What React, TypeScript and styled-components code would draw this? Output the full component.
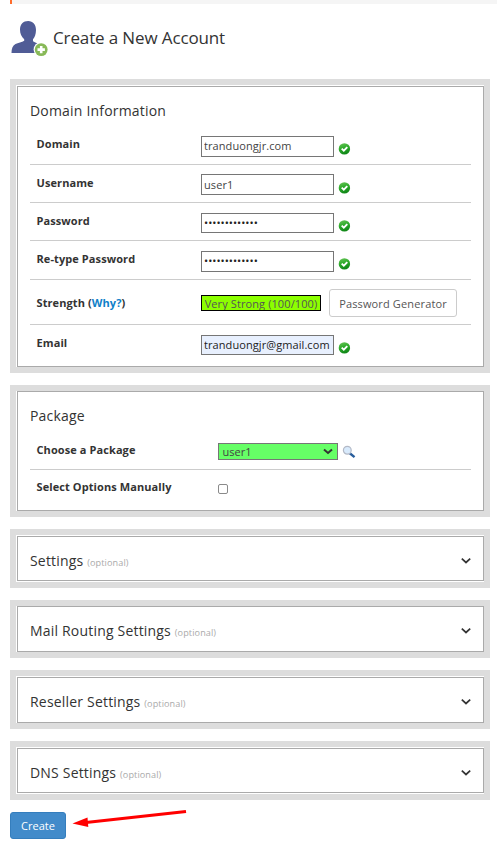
import React from "react";
import styled, { createGlobalStyle } from "styled-components";

const GlobalStyle = createGlobalStyle`
  *, *::before, *::after { box-sizing: border-box; }
  body {
    margin: 0;
    background: #fff;
    color: #333;
    font-family: "Open Sans", "Noto Sans", sans-serif;
    font-size: 12px;
  }
`;

const Page = styled.main`
  position: relative;
  width: 497px;
  height: 850px;
  overflow: hidden;
`;

const Notice = styled.div`
  height: 4px;
  margin-left: 10px;
  border-left: 2px solid #ff6c2c;
  background: #f5f5f5;
`;

const Header = styled.header`
  display: flex;
  height: 75px;
  padding: 16px 0 0 10px;
`;

const PageTitle = styled.h1`
  margin: 6px 0 0 5px;
  font-size: 17px;
  line-height: 24px;
  font-weight: 400;
  letter-spacing: -0.13px;
  white-space: nowrap;
`;

const Panel = styled.section<{ $height: number; $top?: number; $bottom?: number }>`
  width: 480px;
  height: ${(p) => p.$height}px;
  margin: 0 0 12px 10px;
  border: 6px solid #ddd;
  padding: ${(p) => p.$top ?? 0}px 0 ${(p) => p.$bottom ?? 0}px 1px;
`;

const PanelBody = styled.div`
  height: 100%;
  border: 1px solid #aaa;
  padding: 0 12px;
`;

const PanelTitle = styled.h2`
  margin: 0;
  padding-top: 14px;
  font-size: 14px;
  line-height: 20px;
  font-weight: 400;
  letter-spacing: 0.19px;
  white-space: nowrap;
`;

const Optional = styled.small`
  font-size: 9.1px;
  letter-spacing: 0.1px;
  color: #aaa;
`;

const Collapsed = styled.div`
  display: flex;
  justify-content: space-between;
`;

const ChevronBox = styled.span`
  display: flex;
  padding-top: 20px;
`;

const Row = styled.div<{ $height: number; $last?: boolean }>`
  display: flex;
  width: 441px;
  height: ${(p) => p.$height}px;
  border-bottom: ${(p) => (p.$last ? "none" : "1px solid #ccc")};
`;

const Label = styled.label<{ $width: number; $top: number }>`
  flex: none;
  width: ${(p) => p.$width}px;
  padding: ${(p) => p.$top}px 0 0 6.5px;
  font-size: 11px;
  line-height: 16px;
  font-weight: 700;
  letter-spacing: 0.09px;
  white-space: nowrap;
`;

const Link = styled.a`
  color: #0f7fc9;
`;

const Field = styled.div<{ $top: number }>`
  display: flex;
  align-items: flex-start;
  padding-top: ${(p) => p.$top}px;
`;

const TextInput = styled.input<{ $height: number; $lift?: number; $filled?: boolean }>`
  width: 133px;
  height: ${(p) => p.$height}px;
  margin: 0;
  padding: 0 2px ${(p) => p.$lift ?? 0}px;
  border: 1px solid #767676;
  border-radius: 0;
  outline: none;
  background: ${(p) => (p.$filled ? "#e8f0fe" : "#fff")};
  color: ${(p) => (p.$filled ? "#222" : "#444")};
  font-family: inherit;
  font-size: 11px;
  letter-spacing: ${(p) => (p.type === "password" ? "0" : "0.08px")};

  &[type="password"] {
    color: #222;
  }
`;

const StatusIcon = styled.svg<{ $top: number }>`
  margin: ${(p) => p.$top}px 0 0 4px;
  flex: none;
`;

const Strength = styled.div`
  width: 120px;
  height: 16px;
  margin: 6px 8px 0 0;
  border: 1px solid #000;
  background: #8cff00;
  color: #555;
  font-size: 11px;
  line-height: 15px;
  letter-spacing: 0.1px;
  text-align: center;
  white-space: nowrap;
  overflow: hidden;
`;

const GeneratorButton = styled.button`
  width: 128px;
  height: 28px;
  padding: 0;
  border: 1px solid #ccc;
  border-radius: 3px;
  background: #fff;
  color: #555;
  font-family: inherit;
  font-size: 11px;
  letter-spacing: 0.14px;
  white-space: nowrap;
`;

const PackageSelect = styled.div`
  display: flex;
  justify-content: space-between;
  width: 120px;
  height: 17px;
  padding: 0 4px 0 3.5px;
  border: 1px solid #767676;
  background: #66ff66;
  color: #444;
  font-size: 11px;
  line-height: 15px;
`;

const Checkbox = styled.input`
  appearance: none;
  width: 10px;
  height: 10px;
  margin: 0;
  border: 1px solid #8a8a8a;
  border-radius: 2px;
  background: #fff;
`;

const CreateButton = styled.button`
  display: block;
  width: 56px;
  height: 27px;
  margin-left: 10px;
  padding: 0;
  border: 1px solid #357ebd;
  border-radius: 3px;
  background: #428bca;
  color: #fff;
  font-family: inherit;
  font-size: 11px;
`;

const Arrow = styled.svg`
  position: absolute;
  left: 72px;
  top: 806px;
`;

const Valid = ({ top }: { top: number }) => (
  <StatusIcon $top={top} width="13" height="13" viewBox="0 0 13 13">
    <defs>
      <linearGradient id="green" x1="0" y1="0" x2="0.3" y2="1">
        <stop offset="0" stopColor="#6cc65a" />
        <stop offset="0.5" stopColor="#2fac2c" />
        <stop offset="1" stopColor="#118818" />
      </linearGradient>
    </defs>
    <circle cx="6.4" cy="6.9" r="5.7" fill="url(#green)" />
    <path d="M3.7 6.6 5.8 8.6 9.3 5.1" fill="none" stroke="#fff" strokeWidth="1.9" />
  </StatusIcon>
);

const Chevron = () => (
  <ChevronBox>
    <svg width="10" height="8" viewBox="0 0 10 8">
      <path d="M0.8 1.7 5 5.5 9.2 1.7" fill="none" stroke="#333" strokeWidth="1.7" />
    </svg>
  </ChevronBox>
);

const fields = [
  { name: "Domain", value: "tranduongjr.com", type: "text", row: 44, label: 15, top: 15, h: 21, icon: 6, lift: 2 },
  { name: "Username", value: "user1", type: "text", row: 38, label: 10, top: 9, h: 21, icon: 7, lift: 0 },
  { name: "Password", value: "abcdefghijklm", type: "password", row: 38, label: 10, top: 10, h: 20, icon: 6, lift: 2 },
  { name: "Re-type Password", value: "abcdefghijklm", type: "password", row: 39, label: 10, top: 10, h: 21, icon: 6, lift: 2 },
];

const optionalSections = [
  { name: "Settings", height: 59, top: 1, bottom: 1 },
  { name: "Mail Routing Settings", height: 58, top: 0, bottom: 0 },
  { name: "Reseller Settings", height: 59, top: 1, bottom: 0 },
  { name: "DNS Settings", height: 59, top: 1, bottom: 1 },
];

export default function App() {
  return (
    <Page>
      <GlobalStyle />
      <Notice />
      <Header>
        <svg width="38" height="38" viewBox="0 0 38 38">
          <path
            d="M18.2 1C23 1 26 4.7 26 10C26 14.500 24.500 17.500 23 19.300V21.200C25 22.800 29 23.500 31.500 25.300C33 27 33.500 30 33.500 33H1.500C1.500 28.500 2.500 25.500 5.500 24C8 22.700 12 22.500 14.200 20.700V19.200C11.500 17 10 13.500 10 9.500C10 4.300 13.200 1 18.200 1Z"
            fill="#505c96"
          />
          <circle cx="31.2" cy="29.6" r="7.6" fill="#fff" />
          <circle cx="31.2" cy="29.6" r="6.4" fill="#88b958" />
          <path d="M31.2 25.9V33.3M27.5 29.6H34.9" stroke="#fff" strokeWidth="2.6" />
        </svg>
        <PageTitle>Create a New Account</PageTitle>
      </Header>

      <Panel $height={294} $top={1}>
        <PanelBody>
          <PanelTitle>Domain Information</PanelTitle>
          {fields.map((f) => (
            <Row key={f.name} $height={f.row}>
              <Label $width={171} $top={f.label}>{f.name}</Label>
              <Field $top={f.top}>
                <TextInput type={f.type} defaultValue={f.value} $height={f.h} $lift={f.lift} />
                <Valid top={f.icon} />
              </Field>
            </Row>
          ))}
          <Row $height={45}>
            <Label $width={171} $top={15}>
              Strength (<Link>Why?</Link>)
            </Label>
            <Field $top={9}>
              <Strength>Very Strong (100/100)</Strength>
              <GeneratorButton>Password Generator</GeneratorButton>
            </Field>
          </Row>
          <Row $height={40} $last>
            <Label $width={171} $top={10}>Email</Label>
            <Field $top={10}>
              <TextInput type="text" defaultValue="tranduongjr@gmail.com" $height={20} $lift={2} $filled />
              <Valid top={6} />
            </Field>
          </Row>
        </PanelBody>
      </Panel>

      <Panel $height={132}>
        <PanelBody>
          <PanelTitle>Package</PanelTitle>
          <Row $height={44}>
            <Label $width={188} $top={16}>Choose a Package</Label>
            <Field $top={17}>
              <PackageSelect>
                <span>user1</span>
                <svg width="10" height="15" viewBox="0 0 10 15">
                  <path d="M1 5.5 5 9 9 5.5" fill="none" stroke="#333" strokeWidth="2" />
                </svg>
              </PackageSelect>
              <StatusIcon $top={2} width="14" height="14" viewBox="0 0 14 14">
                <path d="M7.5 8 12.5 12.2" stroke="#285d9c" strokeWidth="2.4" />
                <circle cx="5.3" cy="5.2" r="3.9" fill="#d8eafc" stroke="#b3b9c6" strokeWidth="1.2" />
              </StatusIcon>
            </Field>
          </Row>
          <Row $height={40} $last>
            <Label $width={188} $top={9}>Select Options Manually</Label>
            <Field $top={14}>
              <Checkbox type="checkbox" />
            </Field>
          </Row>
        </PanelBody>
      </Panel>

      {optionalSections.map((s) => (
        <Panel key={s.name} $height={s.height} $top={s.top} $bottom={s.bottom}>
          <PanelBody>
            <Collapsed>
              <PanelTitle>
                {s.name} <Optional>(optional)</Optional>
              </PanelTitle>
              <Chevron />
            </Collapsed>
          </PanelBody>
        </Panel>
      ))}

      <CreateButton>Create</CreateButton>
      <Arrow width="118" height="24" viewBox="0 0 118 24">
        <path d="M14 16.6 114 5.5" stroke="#f00" strokeWidth="3" />
        <path d="M0.5 17.5 15.5 11.5 16.3 21Z" fill="#f00" />
      </Arrow>
    </Page>
  );
}
